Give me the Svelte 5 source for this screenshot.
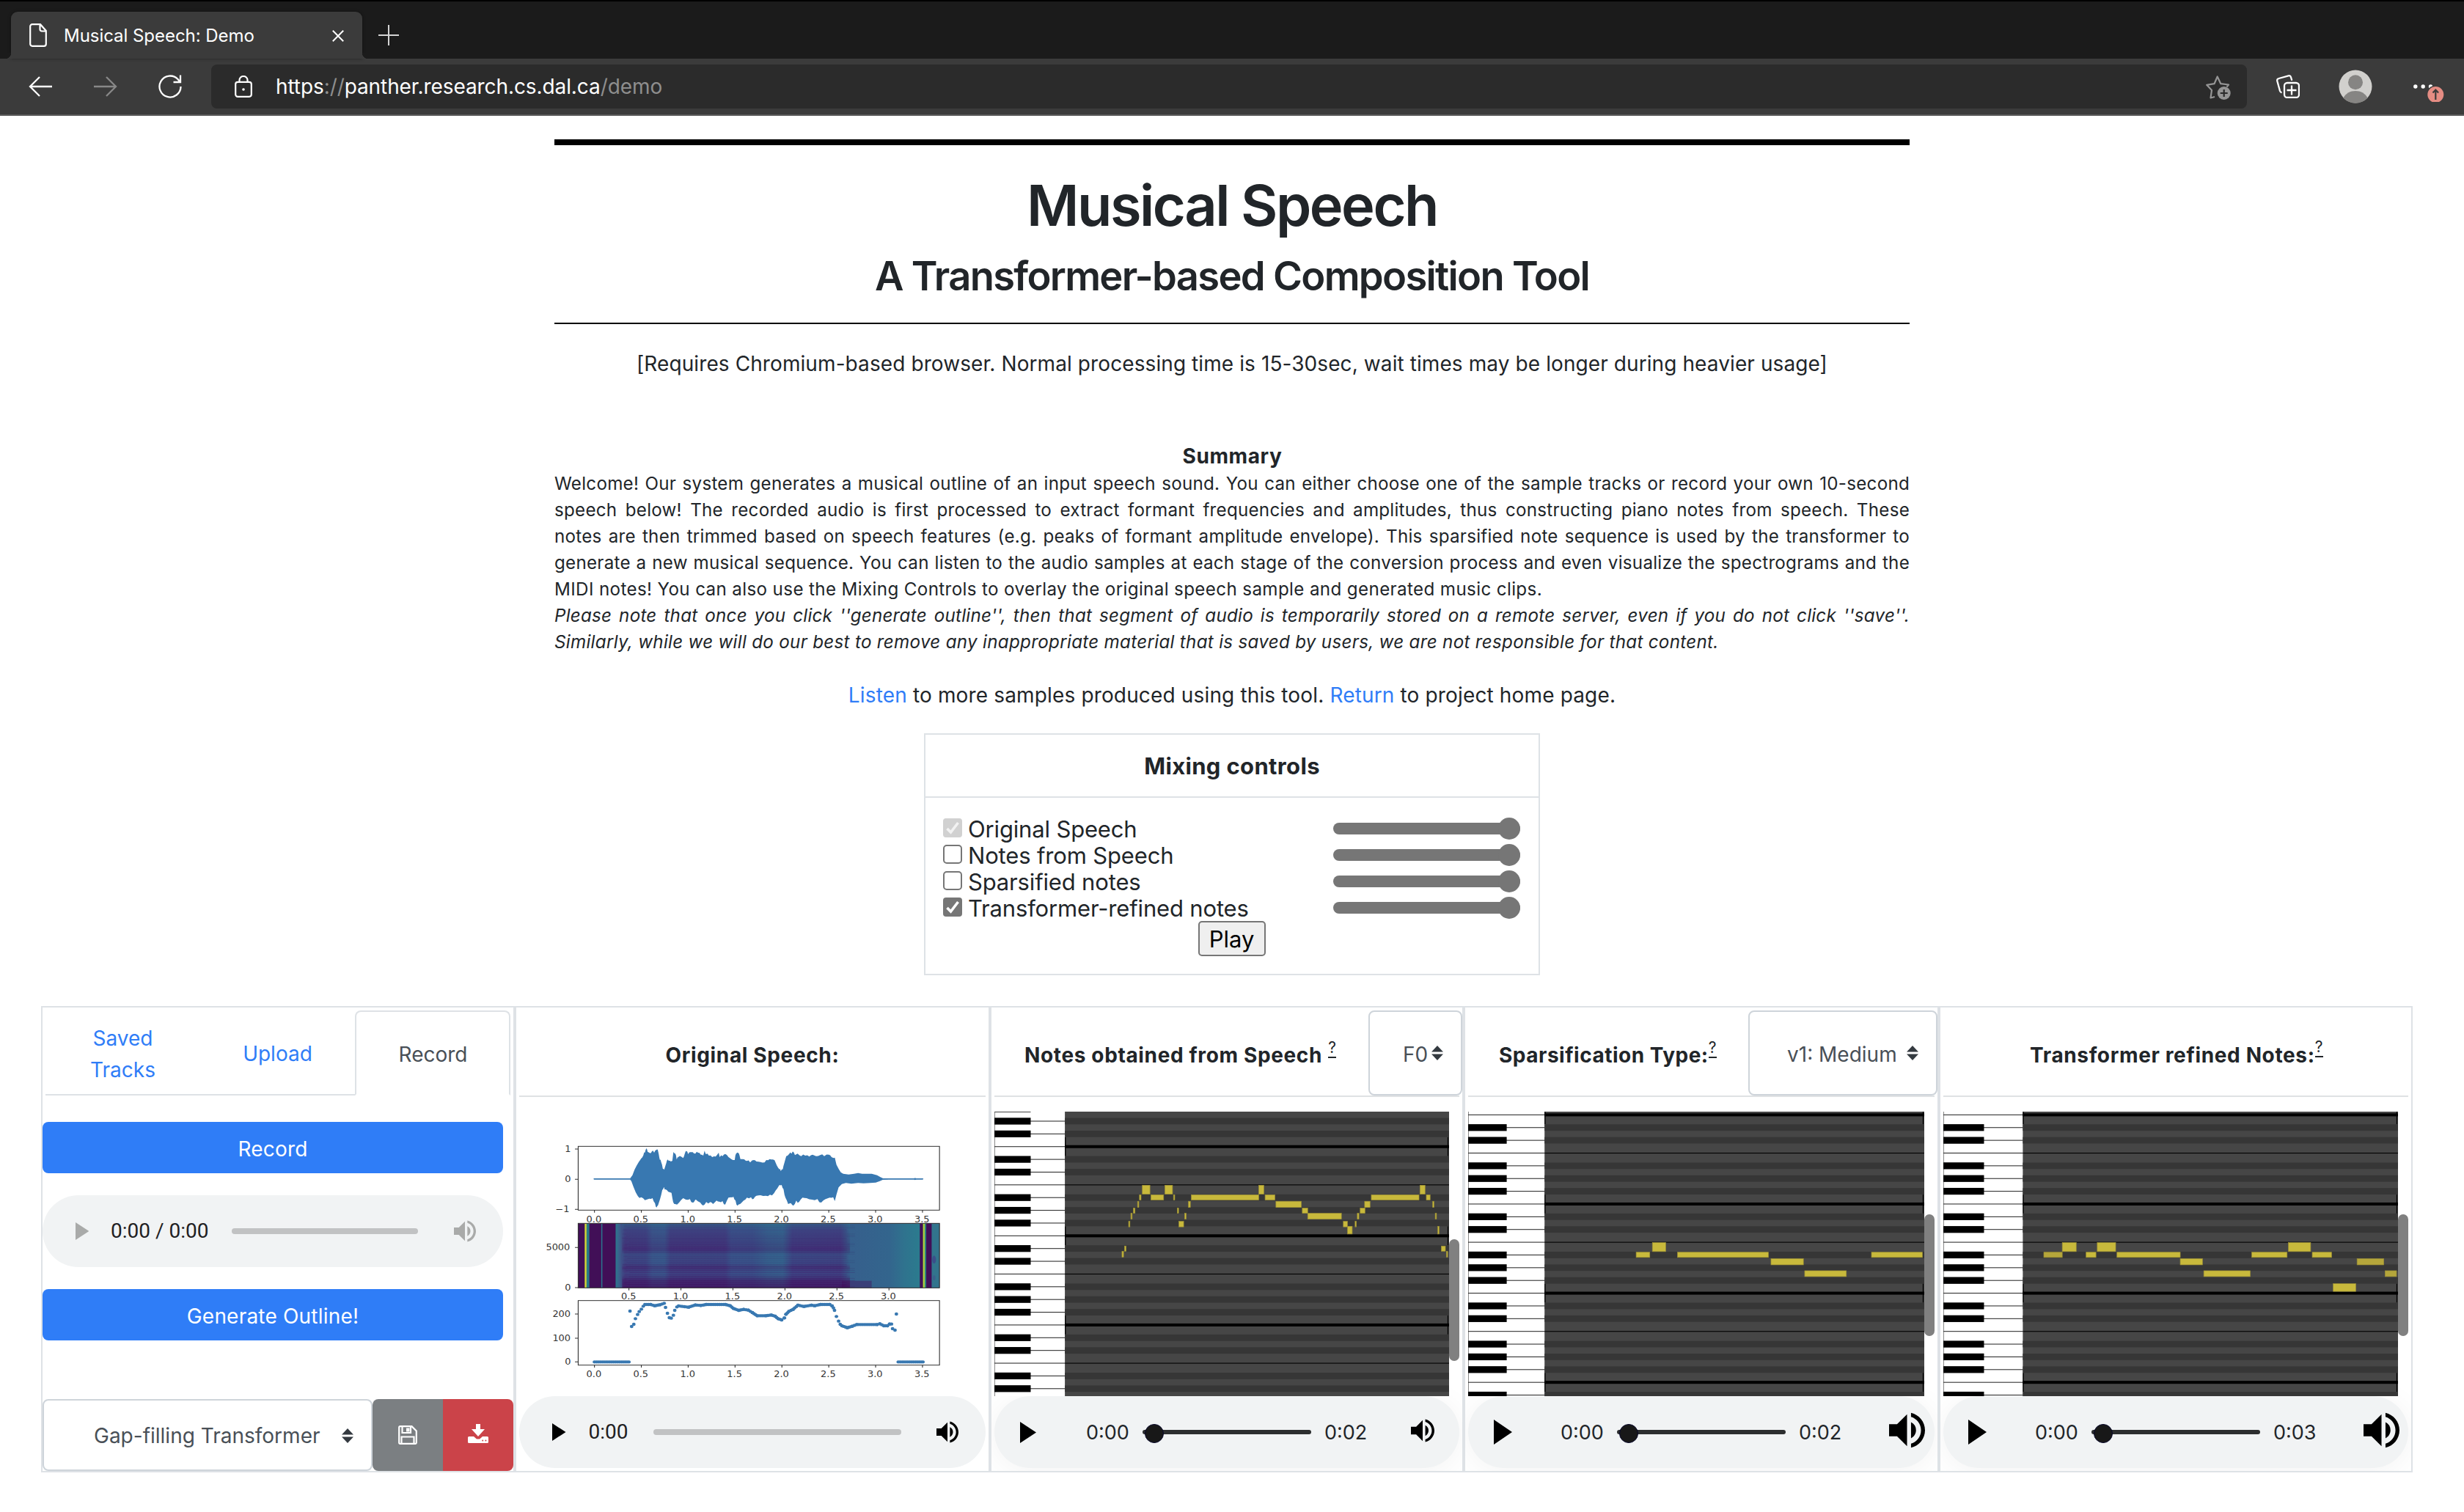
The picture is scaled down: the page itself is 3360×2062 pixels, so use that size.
<script>
  const mix = [
    { label: 'Original Speech', on: true, off: true },
    { label: 'Notes from Speech' },
    { label: 'Sparsified notes' },
    { label: 'Transformer-refined notes', on: true }
  ];

  // Piano roll: one octave is seven white keys
  const KEY = 41.27;
  // vertical span of each semitone, counted down from the C line
  const semis = [[0, 31], [31, 50], [52, 74], [74, 93], [91, 112], [117, 137], [133, 160], [197, 216], [214, 235]];

  const rolls = {
    f0: {
      x: 36.9, w: 1429.6, bx: 151, gx: 258.5, octave: 484, base: 608, thumb: [784, 1178], width: 620, cap: true,
      notes: [
        [438, 443, 8], [446, 451, 7], [459, 463, 5], [466, 470, 4], [474, 479, 3], [487, 491, 2], [493, 498, 1],
        [502, 526, 0], [529, 569, 1], [573, 597, 0], [600, 604, 1], [612, 616, 3], [617, 632, 5], [635, 640, 4],
        [647, 653, 2], [656, 868, 1], [868, 884, 0], [888, 919, 1], [922, 1002, 2], [1005, 1022, 3],
        [1022, 1128, 4], [1134, 1147, 5], [1147, 1162, 6], [1171, 1175, 5], [1178, 1183, 4], [1187, 1202, 3],
        [1201, 1218, 2], [1222, 1372, 1], [1375, 1391, 0], [1395, 1407, 1], [1415, 1419, 2], [1423, 1427, 4],
        [1431, 1435, 6], [1442, 1455, 7], [1458, 1462, 8]
      ]
    },
    sparse: {
      x: 50.7, w: 1434.3, bx: 172, gx: 291, octave: 381, base: 794, thumb: [703, 1098], width: 622,
      notes: [[579, 622, 1], [630, 672, 0], [709, 995, 1], [1003, 1105, 2], [1109, 1240, 4], [1319, 1479, 1]]
    },
    refined: {
      x: 46.1, w: 1429.6, bx: 174, gx: 296, octave: 381, base: 794, thumb: [703, 1098], width: 620,
      notes: [
        [362, 420, 1, 1], [420, 464, 0], [495, 526, 1], [530, 588, 0], [592, 791, 1], [791, 861, 2],
        [865, 1011, 4], [1016, 1127, 1], [1131, 1201, 0], [1206, 1267, 1], [1272, 1343, 6],
        [1347, 1431, 2, 1], [1435, 1471, 4, 1]
      ]
    }
  };
  function lines(octave) {
    const out = [];
    for (let j = -3; j < 24; j++) {
      const y = octave + j * KEY;
      const m = ((j % 7) + 7) % 7;
      if (y > 365 && y < 1315) out.push({ y, kind: m === 0 ? 'octave' : m === 3 ? 'thin' : 'black' });
    }
    return out;
  }

  // Waveform outline
  const top = [350,170,358,158,366,135,374,118,382,103,390,90,398,77,404,65,410,48,414,62,424,68,430,60,438,66,446,55,451,53,455,72,459,95,464,105,470,132,475,136,480,118,485,98,492,100,500,103,505,100,509,63,516,70,521,94,527,84,535,80,545,88,551,70,558,60,563,72,570,64,580,64,590,70,600,66,610,74,619,78,624,58,629,72,640,78,652,84,665,82,676,66,680,84,690,80,702,72,712,84,722,92,735,96,740,70,750,68,756,92,770,93,780,100,792,106,806,96,815,102,830,104,845,106,858,97,870,94,882,97,890,118,900,134,905,142,912,134,918,108,925,80,935,72,945,70,951,62,957,76,967,70,980,80,995,78,1010,82,1022,74,1035,80,1050,76,1065,80,1083,74,1092,84,1100,88,1104,86,1110,115,1118,132,1126,146,1135,152,1155,155,1175,152,1190,149,1205,152,1220,152,1240,152,1260,158,1272,166,1282,171,1300,172];
  const bottom = [1300,175,1282,176,1270,182,1255,188,1235,190,1210,191,1190,190,1165,193,1145,190,1130,194,1118,208,1110,238,1104,264,1098,248,1085,250,1070,256,1054,270,1040,256,1020,258,1000,252,985,250,972,268,962,262,951,283,942,272,932,276,922,250,915,215,908,198,900,198,892,212,880,232,865,238,850,242,830,240,815,242,805,254,795,248,780,250,768,262,755,276,745,283,738,262,730,246,722,248,712,250,700,278,690,264,678,266,668,262,655,276,645,268,630,268,618,282,608,270,598,264,590,258,578,270,570,256,555,258,545,252,530,270,515,276,508,268,502,230,490,226,480,216,474,206,468,218,460,255,452,282,447,290,441,272,432,252,420,254,404,260,390,248,378,244,370,228,362,206,354,182,350,177];
  const jag = (p, s) => {
    const out = [];
    for (let i = 0; i < p.length; i += 2) {
      out.push(`${p[i]},${p[i + 1]}`);
      if (i + 2 < p.length && p[i] > 380 && p[i] < 1100) {
        const mx = (p[i] + p[i + 2]) / 2;
        out.push(`${mx},${(p[i + 1] + p[i + 3]) / 2 + s * (((i * 7) % 5) - 1)}`);
      }
    }
    return out.join(' ');
  };
  const wave = jag(top, -1.8) + ' ' + jag(bottom, 1.8);

  // F0 contour: loose dots, then densely sampled segments
  const loose = [[349,714],[355,777],[363,768],[369,745],[377,728],[383,716],[391,706],[398,694],[480,699],[487,723],[494,741],[501,743],[509,731],[514,711],[522,697],[1103,711],[1110,736],[1118,755],[1124,768],[1317,786],[1326,792],[1331,726]];
  const runs = [
    [404,687,425,687,440,692,460,688,475,682],
    [528,693,565,698,590,689,610,691,630,687,700,687,718,692,730,703,750,711,768,707,785,710,800,720,818,733,850,733,870,730,884,735,895,745,908,750,918,742,924,727,935,715,950,707,968,690,990,695,1018,690,1030,692,1052,687,1085,687,1094,693,1099,701],
    [1130,774,1150,782,1168,776,1185,769,1260,769,1270,766,1285,774,1298,774,1306,767,1313,767],
    [218,922,345,922], [1338,922,1429,922]
  ];
  const dots = [...loose];
  for (const r of runs) {
    for (let i = 0; i + 3 < r.length; i += 2) {
      const n = Math.max(1, Math.round((r[i + 2] - r[i]) / 6.9));
      for (let k = 0; k <= n; k++) dots.push([r[i] + ((r[i + 2] - r[i]) * k) / n, r[i + 1] + ((r[i + 3] - r[i + 1]) * k) / n]);
    }
  }
  const secs = [0, 0.5, 1, 1.5, 2, 2.5, 3, 3.5];
  // harmonic streaks of the spectrogram
  const streaks = [];
  for (let i = 0; i < 62; i++) {
    const y = 360 + i * 4.15;
    streaks.push({ y, x: 318 + ((i * 37) % 30), w: 800 + ((i * 53) % 60), o: (0.06 + ((i * 29) % 7) * 0.02 + (i > 40 ? 0.05 : 0)).toFixed(2), dark: i % 2 });
  }
</script>

<svelte:head><title>Musical Speech: Demo</title></svelte:head>

{#snippet caret()}
  <svg class="caret" viewBox="0 0 16 20"><path d="M8 0 16 8.4H0zM8 20 0 11.6h16z" /></svg>
{/snippet}

{#snippet volume(cls)}
  <svg class="vol {cls}" viewBox="3 3 18 18"><path d="M3 9v6h4l5 5V4L7 9H3zm13.5 3A4.5 4.5 0 0 0 14 7.97v8.05c1.48-.73 2.5-2.25 2.5-4.02zM14 3.23v2.06c2.89.86 5 3.54 5 6.71s-2.11 5.85-5 6.71v2.06c4.01-.91 7-4.49 7-8.77s-2.99-7.86-7-8.77z" /></svg>
{/snippet}

{#snippet play(cls)}
  <svg class="tri {cls}" viewBox="0 0 20 24" preserveAspectRatio="none"><path d="M0 0 20 12 0 24z" /></svg>
{/snippet}

{#snippet roll(r)}
  <div class="roll">
    <svg width={r.width} height="388" viewBox="{r.x} 370.6 {r.w} 921.8" preserveAspectRatio="none">
      <rect x={r.x} y="370" width={r.w} height="923" fill="#fff" />
      <rect x={r.x} y="370" width="2" height="923" fill="#777" />
      {#if r.cap}<rect x={r.x} y="370" width={r.bx - r.x} height="3" fill="#444" />{/if}
      <rect x={r.gx} y="370" width="1500" height="923" fill="#464646" />
      {#each lines(r.octave) as l}
        {#if l.kind === 'black'}
          <rect x={r.gx} y={l.y - 10.4} width="1500" height="20.8" fill="#363636" />
        {/if}
        <rect x={r.x} y={l.y - 1.2} width={r.gx - r.x} height="2.4" fill="#222" />
        {#if l.kind === 'black'}
          <rect x={r.x} y={l.y - 11} width={r.bx - r.x} height="22" />
        {:else if l.kind === 'thin'}
          <rect x={r.gx} y={l.y - 1.2} width="1500" height="2.6" />
        {:else}
          <rect x={r.gx} y={l.y - 4.8} width="1500" height="9.6" />
          <rect x={r.gx} y={l.y - 30.5} width="3" height="61" />
          <rect x={r.x + r.w - 5} y={l.y - 30.5} width="3" height="61" />
        {/if}
      {/each}
      {#each r.notes as n}
        <rect x={n[0]} y={r.base + semis[n[2]][0] + 1} width={n[1] - n[0]} height={semis[n[2]][1] - semis[n[2]][0] - 2} fill={n[3] ? '#b5a63b' : '#c8b93c'} stroke="#9b8f35" stroke-width="1.6" />
      {/each}
    </svg>
    <div class="scroll" style="padding-top:{(r.thumb[0] - 370.6) / 2.3758}px"><i></i></div>
  </div>
{/snippet}

{#snippet player(end, cls)}
  <div class="audio custom {cls}">
    {@render play('')}
    <span class="t0">0:00</span>
    <div class="seek"><i></i></div>
    <span class="t1">{end}</span>
    {@render volume('')}
  </div>
{/snippet}

<div class="tabs">
  <div class="tab">
    <svg class="page" viewBox="0 0 24 32"><path d="M4 1.2h11L22.8 10v18a2.8 2.8 0 0 1-2.8 2.8H4A2.8 2.8 0 0 1 1.2 28V4A2.8 2.8 0 0 1 4 1.2zM14.5 1.5V8a2.5 2.5 0 0 0 2.5 2.5h5.5" /></svg>
    <span>Musical Speech: Demo</span>
    <svg class="close" viewBox="0 0 16 16"><path d="M.8.8l14.4 14.4M15.2.8.8 15.2" /></svg>
  </div>
  <svg class="plus" viewBox="0 0 28 28"><path d="M14 0v28M0 14h28" /></svg>
</div>
<div class="bar">
  <svg class="back" viewBox="0 0 32 28"><path d="M15 1 2 14l13 13M2 14h30" /></svg>
  <svg class="fwd" viewBox="0 0 32 28"><path d="M17 1l13 13-13 13M30 14H0" /></svg>
  <svg class="reload" viewBox="0 0 32 32"><path d="M30.500 16A14.500 14.500 0 1 1 26.500 6l3 3.500M30 .5v9.500H20.500" /></svg>
  <div class="omni">
    <svg class="lock" viewBox="0 0 24 30"><rect x="1.200" y="8.800" width="21.600" height="20" rx="3" /><path d="M6.500 8.500V6a5.500 5 0 0 1 11 0v2.500" /><circle cx="12" cy="19" r="1.800" /></svg>
    <span class="url">https<em>://</em>panther.research.cs.dal.ca<em>/demo</em></span>
    <svg class="star" viewBox="0 0 34 34"><path d="M12 29 6.500 30.500 8 20 1.200 12.800 11.500 11.200 15.700 1.500 20.300 11.200 31 12.500 28.500 15.500" /><circle cx="24.700" cy="24" r="9" /><path class="dk" d="M24.700 19v10M19.700 24h10" /></svg>
  </div>
  <svg class="coll" viewBox="0 0 32 32"><path d="M7.500 24.500a4 4 0 0 1-2.500-2.500L1.300 8.500A3 3 0 0 1 3.500 5L16.500 1.300a3 3 0 0 1 3.500 2l1.300 4.500" /><rect x="11" y="11" width="20" height="20" rx="4" /><path d="M21 14.500v13M14.500 21h13" /></svg>
  <svg class="avatar" viewBox="0 0 46 46"><circle cx="23" cy="23" r="22.500" fill="#d1d0cd" /><circle cx="23" cy="17.300" r="10" fill="#868583" /><path d="M6.500 38.500C10 32 16 29 23 29s13 3 16.500 9.500A22.500 22.500 0 0 1 6.500 38.500z" fill="#868583" /></svg>
  <svg class="dots" viewBox="0 0 42 26"><circle cx="2.800" cy="5" r="2.700" /><circle cx="13.200" cy="5" r="2.700" /><circle cx="23.500" cy="5" r="2.700" /><circle cx="30.300" cy="16" r="12.500" fill="#3b3b3b" /><circle cx="30.300" cy="16" r="11" fill="#e58c83" /><path d="M30.300 23V10M26.500 13.500l3.800-4 3.800 4" /></svg>
</div>

<main>
  <hr class="thick" />
  <h1>Musical Speech</h1>
  <h2>A Transformer-based Composition Tool</h2>
  <hr />
  <p class="req">[Requires Chromium-based browser. Normal processing time is 15-30sec, wait times may be longer during heavier usage]</p>
  <h3>Summary</h3>
  <div class="summary">
    <p class="full">Welcome! Our system generates a musical outline of an input speech sound. You can either choose one of the sample tracks or record your own 10-second</p>
    <p class="full">speech below! The recorded audio is first processed to extract formant frequencies and amplitudes, thus constructing piano notes from speech. These</p>
    <p class="full">notes are then trimmed based on speech features (e.g. peaks of formant amplitude envelope). This sparsified note sequence is used by the transformer to</p>
    <p class="full">generate a new musical sequence. You can listen to the audio samples at each stage of the conversion process and even visualize the spectrograms and the</p>
    <p>MIDI notes! You can also use the Mixing Controls to overlay the original speech sample and generated music clips.</p>
    <p class="full it">Please note that once you click ''generate outline'', then that segment of audio is temporarily stored on a remote server, even if you do not click ''save''.</p>
    <p class="it last">Similarly, while we will do our best to remove any inappropriate material that is saved by users, we are not responsible for that content.</p>
  </div>
  <p class="links"><a>Listen</a> to more samples produced using this tool. <a>Return</a> to project home page.</p>
</main>

<section class="mix">
  <h4>Mixing controls</h4>
  <div class="mixbody">
    {#each mix as m}
      <div class="row">
        <svg class="cb" viewBox="0 0 26 26">
          {#if m.on}
            <rect width="26" height="26" rx="4" fill={m.off ? '#d1d1d1' : '#767676'} />
            <path d="M5.500 14l5 5L20.500 6" fill="none" stroke={m.off ? '#f2f2f2' : '#fff'} stroke-width="3.600" />
          {:else}
            <rect x="1" y="1" width="24" height="24" rx="4" fill="#fff" stroke="#767676" stroke-width="2" />
          {/if}
        </svg>
        <span>{m.label}</span>
        <div class="range"><i></i></div>
      </div>
    {/each}
    <button class="playbtn">Play</button>
  </div>
</section>

<section class="table">
  <div class="col c1">
    <nav>
      <a>Saved<br />Tracks</a><a>Upload</a><a class="active">Record</a>
    </nav>
    <button class="blue">Record</button>
    <div class="audio native dim">
      {@render play('')}<span>0:00 / 0:00</span><div class="track"></div>{@render volume('')}
    </div>
    <button class="blue">Generate Outline!</button>
    <div class="group">
      <div class="select"><span>Gap-filling Transformer</span>{@render caret()}</div>
      <button class="gray"><svg viewBox="0 0 26 26"><path fill="none" stroke="#fff" stroke-width="2.200" d="M2.500 1.200h16l6.300 6.300v16a1.300 1.300 0 0 1-1.300 1.300h-21a1.300 1.300 0 0 1-1.300-1.300v-21a1.300 1.300 0 0 1 1.300-1.300zM5.500 1.500V10h11.500V1.500M4.500 24.500V15.500h17v9" /><path fill="#fff" d="M11 3.500h4.500v5H11z" /></svg></button>
      <button class="red"><svg viewBox="0 0 28 26"><path fill="#fff" d="M11 0h6v7h6l-9 10-9-10h6zM1.500 17H8l4 3.500h4L20 17h6.500A1.500 1.500 0 0 1 28 18.500v6A1.500 1.500 0 0 1 26.500 26h-25A1.500 1.500 0 0 1 0 24.500v-6A1.500 1.500 0 0 1 1.500 17z" /><circle cx="20.200" cy="22.600" r="1" fill="#cb4349" /><circle cx="24.400" cy="22.600" r="1" fill="#cb4349" /></svg></button>
    </div>
  </div>

  <div class="col c2 wide">
    <header><b>Original Speech:</b></header>
    <svg class="plots" viewBox="0 0 1568 1020" preserveAspectRatio="none">
      <defs>
        <linearGradient id="spec" x1="0" x2="1">
          <stop offset="0" stop-color="#2c788e" /><stop offset=".015" stop-color="#3d5a8b" /><stop offset=".03" stop-color="#413a7e" />
          <stop offset=".1" stop-color="#403c80" /><stop offset=".12" stop-color="#3c528a" /><stop offset=".16" stop-color="#3a558b" /><stop offset=".18" stop-color="#413a7e" />
          <stop offset=".36" stop-color="#41397e" /><stop offset=".38" stop-color="#3c4c88" /><stop offset=".45" stop-color="#3b4c87" /><stop offset=".5" stop-color="#375d8c" />
          <stop offset=".55" stop-color="#36618d" /><stop offset=".58" stop-color="#403c80" /><stop offset=".74" stop-color="#41397e" /><stop offset=".77" stop-color="#365f8c" />
          <stop offset=".9" stop-color="#33658d" /><stop offset=".95" stop-color="#2f738e" /><stop offset="1" stop-color="#2b7b8e" />
        </linearGradient>
        <linearGradient id="shade" x1="0" x2="0" y1="0" y2="1">
          <stop offset="0" stop-color="#2a788e" stop-opacity=".5" /><stop offset=".12" stop-color="#31688e" stop-opacity=".15" /><stop offset=".4" stop-color="#440154" stop-opacity=".22" />
          <stop offset=".48" stop-color="#31688e" stop-opacity=".28" /><stop offset=".62" stop-color="#31688e" stop-opacity=".15" /><stop offset=".68" stop-color="#440154" stop-opacity=".2" />
          <stop offset=".78" stop-color="#3b528b" stop-opacity=".15" /><stop offset=".88" stop-color="#440154" stop-opacity=".4" /><stop offset="1" stop-color="#440154" stop-opacity=".6" />
        </linearGradient>
      </defs>
      <g class="frames">
        <rect x="158" y="40" width="1332" height="261" /><rect x="158" y="671" width="1332" height="264" />
        {#each secs as s}
          <path d="M{218 + s * 345.500} 301v10M{218 + s * 345.500} 935v10" />
        {/each}
        <path d="M158 51h-12M158 175h-12M158 298h-12M158 454h-12M158 618h-12M158 726h-12M158 825h-12M158 922h-12" />
        {#each secs.slice(1, 7) as s}<path d="M{345 + (s - 0.5) * 383.500} 619v10" />{/each}
      </g>
      <polygon class="ink" points={wave} />
      <path d="M217 173.500H1428" stroke="#3878b1" stroke-width="5" stroke-linecap="round" /><circle cx="1400" cy="173.500" r="4" class="ink" />
      <rect x="158" y="355" width="1332" height="264" fill="#410f57" />
      <rect x="296" y="355" width="1122" height="264" fill="url(#spec)" />
      <rect x="320" y="355" width="840" height="264" fill="url(#shade)" />
      <rect x="1130" y="590" width="110" height="29" fill="#440154" opacity=".35" />
      {#each streaks as s}
        <rect x={s.x} y={s.y} width={s.w} height="2.600" fill={s.dark ? '#3a0a58' : '#35608d'} opacity={s.o} />
      {/each}
      <rect x="182" y="355" width="7" height="264" fill="#cfd638" /><rect x="189" y="355" width="10" height="264" fill="#287a88" />
      <rect x="243" y="355" width="4" height="264" fill="#2a788e" />
      <rect x="1418" y="355" width="11" height="264" fill="#410f57" /><rect x="1429" y="355" width="7" height="264" fill="#a9d33f" /><rect x="1436" y="355" width="5" height="264" fill="#2a8a80" />
      <rect x="1441" y="355" width="20" height="264" fill="#410f57" /><rect x="1461" y="355" width="29" height="264" fill="#32748d" />
      <ellipse cx="1470" cy="503" rx="7" ry="16" fill="#3b4f8a" /><ellipse cx="1470" cy="578" rx="5" ry="10" fill="#3b5f8c" />
      <g class="frames"><rect x="158" y="355" width="1332" height="264" /></g>
      {#each dots as d}<circle cx={d[0]} cy={d[1]} r="6.600" class="ink" />{/each}
      <g class="mid">
        {#each secs as s}
          <text x={216 + s * 345.500} y="351">{s.toFixed(1)}</text><text x={216 + s * 345.500} y="984">{s.toFixed(1)}</text>
        {/each}
        {#each secs.slice(1, 7) as s}<text x={344 + (s - 0.5) * 383} y="667">{s.toFixed(1)}</text>{/each}
      </g>
      <g class="end">
        <text x="131" y="62">1</text><text x="131" y="186">0</text><text x="126" y="309">−1</text>
        <text x="128" y="466">5000</text><text x="131" y="630">0</text>
        <text x="130" y="738">200</text><text x="130" y="837">100</text><text x="131" y="934">0</text>
      </g>
    </svg>
    <div class="audio native">
      {@render play('')}<span>0:00</span><div class="track"></div>{@render volume('')}
    </div>
  </div>

  <div class="col c3">
    <header><b>Notes obtained from Speech</b><sup>?</sup><div class="select"><span>F0</span>{@render caret()}</div></header>
    {@render roll(rolls.f0)}
    {@render player('0:02', 'p3')}
  </div>

  <div class="col c4 wide">
    <header><b>Sparsification Type:</b><sup>?</sup><div class="select"><span>v1: Medium</span>{@render caret()}</div></header>
    {@render roll(rolls.sparse)}
    {@render player('0:02', 'big p4')}
  </div>

  <div class="col c5">
    <header><b>Transformer refined Notes:</b><sup>?</sup></header>
    {@render roll(rolls.refined)}
    {@render player('0:03', 'big p5')}
  </div>
</section>

<style>
  :global(body) { background: #fff; }
  :global(#app) { width: 3360px; height: 2062px; overflow: hidden; font-family: Inter, "Liberation Sans", sans-serif; color: #212529; }
  h1, h2, h3, h4, p, hr { margin: 0; font-weight: 400; }
  hr { border: 0; height: 2px; background: #000; }
  button { font-family: inherit; padding: 0; margin: 0; border: 0; display: block; }
  svg { display: block; flex: none; }
  span, b { white-space: pre; }

  .tabs { height: 78px; border-top: 2px solid #000; background: #1b1b1b; display: flex; align-items: flex-start; }
  .tab { position: relative; width: 479px; height: 64px; margin: 14px 0 0 15px; background: #3b3b3b; border-radius: 9px 9px 0 0; display: flex; align-items: center; box-shadow: 0 0 4px #0006; }
  .tab::before, .tab::after { content: ''; position: absolute; bottom: 0; width: 8px; height: 8px; }
  .tab::before { left: -8px; background: radial-gradient(circle at 0 0, #1b1b1b 8px, #3b3b3b 8.500px); }
  .tab::after { right: -8px; background: radial-gradient(circle at 100% 0, #1b1b1b 8px, #3b3b3b 8.500px); }
  .page { width: 24px; height: 32px; margin-left: 25px; fill: none; stroke: #fff; stroke-width: 2.200; }
  .tab span { margin-left: 23px; font-size: 24px; letter-spacing: -.04px; color: #fff; width: 366px; }
  .close { width: 16px; height: 16px; stroke: #fff; stroke-width: 2; padding-top: 1px; }
  .plus { width: 28px; height: 28px; margin: 32px 0 0 22px; stroke: #d4d4d4; stroke-width: 2; }
  .bar { height: 76px; background: #3b3b3b; border-bottom: 2px solid #5b5b5b; display: flex; align-items: center; fill: none; stroke: none; }
  .back, .fwd, .reload, .coll { fill: none; stroke: #fff; stroke-width: 2.300; }
  .back { width: 32px; height: 28px; margin-left: 39px; }
  .fwd { width: 32px; height: 28px; margin-left: 57px; stroke: #888; }
  .reload { width: 32px; height: 32px; margin-left: 56px; }
  .omni { width: 2776px; height: 60px; margin-left: 40px; background: #2b2b2b; border-radius: 8px; display: flex; align-items: center; }
  .lock { width: 24px; height: 30px; margin-left: 32px; fill: none; stroke: #fff; stroke-width: 2.200; }
  .lock circle { fill: #fff; stroke: none; }
  .url { margin-left: 32px; font-size: 28px; letter-spacing: -.09px; color: #fff; }
  .url em { font-style: normal; color: #8e8e8e; }
  .star { width: 34px; height: 34px; margin: 4px 22px 0 auto; fill: none; stroke: #959595; stroke-width: 2.200; stroke-linejoin: round; }
  .star circle { fill: #959595; stroke: none; }
  .star .dk { stroke: #2b2b2b; }
  .coll { width: 32px; height: 32px; margin-left: 40px; }
  .avatar { width: 46px; height: 46px; margin-left: 53px; }
  .dots { width: 42px; height: 26px; margin: 16px 0 0 56px; fill: #fff; }
  .dots path { fill: none; stroke: #3b3b3b; stroke-width: 2.200; }

  main { width: 1848px; margin: 0 auto; padding-top: 32px; }
  .thick { height: 8px; }
  h1 { margin-top: 34px; font-size: 77.500px; line-height: 96px; font-weight: 560; letter-spacing: -2.500px; text-align: center; white-space: nowrap; }
  h2 { margin-top: 14px; margin-bottom: 30px; font-size: 54.300px; line-height: 68px; font-weight: 570; letter-spacing: -1.700px; text-align: center; white-space: nowrap; }
  .req { margin-top: 32px; font-size: 28px; line-height: 44px; letter-spacing: .09px; text-align: center; white-space: nowrap; }
  h3 { margin-top: 84px; font-size: 28px; line-height: 41px; height: 40px; font-weight: 700; letter-spacing: .6px; text-align: center; padding-left: 1px; }
  .summary p { font-size: 24.200px; line-height: 36px; height: 36px; letter-spacing: .36px; white-space: nowrap; }
  .summary .full { text-align: justify; text-align-last: justify; white-space: normal; letter-spacing: .25px; }
  .summary .last { letter-spacing: .3px; }
  .it { font-style: italic; }
  .links { margin-top: 32px; font-size: 28px; line-height: 44px; letter-spacing: .15px; text-align: center; }
  a { color: #2f7df7; }

  .mix { box-sizing: border-box; width: 840px; height: 330px; margin: 30px auto 0; border: 2px solid #dee2e6; }
  h4 { height: 84px; line-height: 86px; border-bottom: 2px solid #dee2e6; text-align: center; font-size: 31px; font-weight: 700; letter-spacing: .35px; }
  .mixbody { padding: 24px 25px 0 24px; }
  .row { height: 36px; display: flex; align-items: center; font-size: 31px; letter-spacing: -.16px; }
  .row svg { width: 26px; height: 26px; margin-right: 8px; margin-top: -2px; }
  .range { margin-left: auto; width: 255px; height: 16px; border-radius: 8px; background: #767676; display: flex; align-items: center; justify-content: flex-end; }
  .range i { width: 30px; height: 30px; border-radius: 50%; background: #767676; }
  .playbtn { box-sizing: border-box; width: 92px; height: 48px; margin: 0 auto; border: 2px solid #767676; border-radius: 5px; background: #efefef; color: #000; font-size: 31px; line-height: 45px; }

  .table { margin: 42px 0 0 56px; display: flex; }
  .col { box-sizing: border-box; width: 646px; height: 636px; border: 2px solid #dee2e6; overflow: hidden; }
  .wide { width: 648px; }
  nav { display: flex; height: 116px; margin: 4px 4px 0; border-bottom: 2px solid #dee2e6; box-sizing: border-box; width: 634px; }
  nav a { flex: 1; display: flex; align-items: center; justify-content: center; text-align: center; font-size: 28px; line-height: 42.500px; padding-top: 5px; }
  nav .active { box-sizing: border-box; flex: 0 0 212px; height: 116px; color: #495057; border: 2px solid #dee2e6; border-bottom: 2px solid #fff; border-radius: 8px 8px 0 0; background: #fff; padding: 5px 0 0 1px; }
  .blue { width: 628px; height: 70px; border-radius: 8px; background: #2f7df7; color: #fff; font-size: 28px; line-height: 72px; letter-spacing: .2px; padding-top: 1px; }
  nav + .blue { margin-top: 36px; }
  .group { display: flex; margin-top: 80px; height: 98px; }
  .select { box-sizing: border-box; border: 2px solid #ced4da; border-radius: 8px; background: #fff; display: flex; align-items: center; font-size: 28px; color: #495057; }
  .caret { width: 16px; height: 20px; fill: #343a40; }
  .group .select { width: 450px; height: 98px; padding: 1px 24px 0 68px; justify-content: space-between; }
  .group button { width: 96px; height: 98px; display: flex; align-items: center; justify-content: center; }
  .group button svg { width: 26px; height: 26px; }
  .gray { background: #7b7f82; border-radius: 8px 0 0 8px; }
  .red { background: #cb4349; border-radius: 0 8px 8px 0; }
  .group .red svg { width: 28px; margin-top: -4px; }

  header { display: flex; align-items: center; height: 120px; font-size: 28px; position: relative; }
  header::after { content: ''; position: absolute; left: 4px; right: 4px; bottom: -2px; height: 2px; background: #dfe2e4; }
  header b { letter-spacing: .64px; padding-top: 9px; }
  sup { font-size: 21px; line-height: 21px; height: 23px; width: 11px; display: flex; justify-content: center; border-bottom: 2px solid #212529; margin-top: -7px; vertical-align: baseline; }
  header .select { margin: 4px 0 0 auto; height: 116px; padding-top: 4px; }
  header .caret { margin-top: -4px; }
  .c2 header { justify-content: center; }
  .c3 header b { margin-left: 45px; }
  .c3 sup { margin-left: 8px; }
  .c3 .select { width: 128px; padding-left: 45px; }
  .c3 .caret { margin-left: 5px; }
  .c4 header b { margin-left: 46px; letter-spacing: .5px; }
  .c4 .select { width: 258px; padding-left: 51px; }
  .c4 .caret { margin-left: 13px; }
  .c5 header b { margin-left: 122px; }
  .c5 sup { margin-top: -10px; }

  .plots { width: 580px; height: 340px; margin: 56px 0 0 26px; font-family: "DejaVu Sans", sans-serif; font-size: 35px; }
  .plots text { fill: #333; }
  .frames { fill: none; stroke: #333; stroke-width: 3; }
  .ink { fill: #3878b1; }
  .mid { text-anchor: middle; }
  .end { text-anchor: end; }

  .roll { display: flex; height: 388px; margin: 22px 0 0 4px; position: relative; }
  .scroll { box-sizing: border-box; width: 14px; }
  .scroll i { display: block; height: 166px; border-radius: 7px; background: #808080; }

  .audio { background: #f1f3f4; border-radius: 49px; height: 98px; display: flex; align-items: center; color: #212529; }
  .native { font-family: Roboto, sans-serif; font-size: 28px; color: #1f2022; }
  .tri { width: 18.500px; height: 24px; }
  .vol { width: 30px; height: 30px; }
  .dim { width: 628px; margin: 30px 0; }
  .dim .tri { margin-left: 44.500px; margin-top: -1px; fill: #a9aaa9; }
  .dim .vol { margin-left: 49px; margin-top: -1px; fill: #a9aaa9; }
  .dim span { margin: -1px 0 0 30px; width: 134px; }
  .track { height: 8px; border-radius: 4px; background: #c1c2c3; }
  .dim .track { width: 254px; margin: -1px 0 0 31px; }
  .c2 .audio { width: 636px; margin: 14px 0 0 4px; }
  .c2 .tri { margin-left: 45px; }
  .c2 .audio span { margin: -1px 0 0 31px; width: 56px; }
  .c2 .track { width: 338px; margin-left: 32px; margin-top: -1px; }
  .c2 .vol { margin-left: 48px; }
  .custom { width: 634px; margin-left: 4px; font-size: 27px; box-shadow: 0 4px 40px #0000000d; }
  .custom .tri { width: 22px; height: 29px; margin-left: 35px; }
  .custom .vol { width: 32px; height: 32px; margin-left: 60px; margin-top: -5px; }
  .custom .t0 { margin-left: 68px; width: 57px; }
  .custom .t1 { margin-left: 18px; width: 58px; }
  .seek { width: 230px; height: 6px; border-radius: 3px; background: #2c2e2f; margin-left: 20px; display: flex; align-items: center; }
  .seek i { flex: none; box-sizing: border-box; width: 26px; height: 26px; border-radius: 50%; background: #181818; border: 1.500px solid #08082a; margin: 3px 0 0 3px; }
  .big .tri { width: 25px; height: 34px; margin-left: 35px; }
  .big .t0 { margin-left: 66px; }
  .big .vol { width: 49px; height: 49px; margin-left: 65px; }
  .p4 { width: 636px; }
  .p5 .tri { margin-left: 34px; }
</style>
